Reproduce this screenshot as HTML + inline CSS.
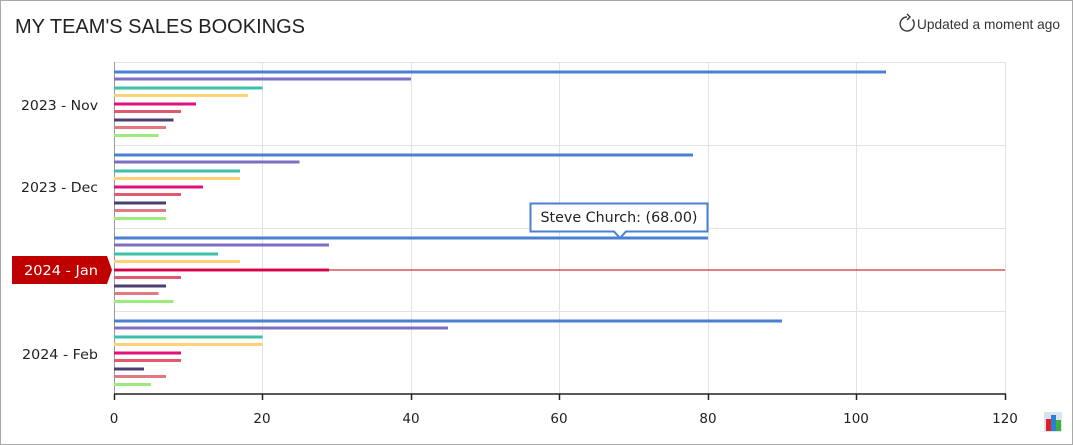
<!DOCTYPE html>
<html><head><meta charset="utf-8"><style>
html,body{margin:0;padding:0;background:#fff}
.w{position:relative;width:1071px;height:443px;border:1px solid #a9a9a9;background:#fff;overflow:hidden}
svg{position:absolute;left:-1px;top:-1px}
</style></head><body><div class="w">
<svg width="1073" height="445" xmlns="http://www.w3.org/2000/svg" font-family="'DejaVu Sans',Verdana,sans-serif">
<text x="15" y="33" font-family="'Liberation Sans',Arial,sans-serif" font-size="20" fill="#222" textLength="290" lengthAdjust="spacingAndGlyphs">MY TEAM'S SALES BOOKINGS</text>
<g fill="none" stroke="#333" stroke-width="1.4"><path d="M907 17 A7 7 0 1 0 912.5 19.5"/><path d="M907 14 L910 17 L907 20"/></g>
<text x="917" y="29" font-family="'Liberation Sans',Arial,sans-serif" font-size="14" fill="#333" textLength="143" lengthAdjust="spacingAndGlyphs">Updated a moment ago</text>
<g stroke="#e2e2e2" stroke-width="1">
<line x1="114" y1="62.5" x2="1005" y2="62.5"/><line x1="114" y1="145.5" x2="1005" y2="145.5"/><line x1="114" y1="228.5" x2="1005" y2="228.5"/><line x1="114" y1="311.5" x2="1005" y2="311.5"/>
<line x1="262.5" y1="62" x2="262.5" y2="394"/><line x1="411.5" y1="62" x2="411.5" y2="394"/><line x1="559.5" y1="62" x2="559.5" y2="394"/><line x1="708.5" y1="62" x2="708.5" y2="394"/><line x1="856.5" y1="62" x2="856.5" y2="394"/><line x1="1005.5" y1="62" x2="1005.5" y2="394"/>
</g>
<line x1="114.5" y1="62" x2="114.5" y2="394" stroke="#999"/>
<g id="bars">
<rect x="114" y="70.5" width="772" height="3" fill="#4a7fd4"/><rect x="114" y="77.5" width="297" height="3" fill="#7b6fc4"/><rect x="114" y="86.5" width="148.5" height="3" fill="#3dbfa8"/><rect x="114" y="94" width="134" height="3" fill="#ffd27a"/><rect x="114" y="102.5" width="82" height="3" fill="#e0117a"/><rect x="114" y="110" width="67" height="3" fill="#e05a6e"/><rect x="114" y="118.5" width="59.5" height="3" fill="#4a3f6e"/><rect x="114" y="126" width="52" height="3" fill="#e07a80"/><rect x="114" y="134" width="44.5" height="3" fill="#9fea80"/>
<rect x="114" y="153.5" width="579" height="3" fill="#4a7fd4"/><rect x="114" y="160.5" width="185.5" height="3" fill="#7b6fc4"/><rect x="114" y="169.5" width="126" height="3" fill="#3dbfa8"/><rect x="114" y="177" width="126" height="3" fill="#ffd27a"/><rect x="114" y="185.5" width="89" height="3" fill="#e0117a"/><rect x="114" y="193" width="67" height="3" fill="#e05a6e"/><rect x="114" y="201.5" width="52" height="3" fill="#4a3f6e"/><rect x="114" y="209" width="52" height="3" fill="#e07a80"/><rect x="114" y="217" width="52" height="3" fill="#9fea80"/>
<rect x="114" y="236.5" width="594" height="3" fill="#4a7fd4"/><rect x="114" y="243.5" width="215" height="3" fill="#7b6fc4"/><rect x="114" y="252.5" width="104" height="3" fill="#3dbfa8"/><rect x="114" y="260" width="126" height="3" fill="#ffd27a"/><rect x="114" y="268.5" width="215" height="3" fill="#e0117a"/><rect x="114" y="276" width="67" height="3" fill="#e05a6e"/><rect x="114" y="284.5" width="52" height="3" fill="#4a3f6e"/><rect x="114" y="292" width="44.5" height="3" fill="#e07a80"/><rect x="114" y="300" width="59.5" height="3" fill="#9fea80"/>
<rect x="114" y="319.5" width="668" height="3" fill="#4a7fd4"/><rect x="114" y="326.5" width="334" height="3" fill="#7b6fc4"/><rect x="114" y="335.5" width="148.5" height="3" fill="#3dbfa8"/><rect x="114" y="343" width="148.5" height="3" fill="#ffd27a"/><rect x="114" y="351.5" width="67" height="3" fill="#e0117a"/><rect x="114" y="359" width="67" height="3" fill="#e05a6e"/><rect x="114" y="367.5" width="30" height="3" fill="#4a3f6e"/><rect x="114" y="375" width="52" height="3" fill="#e07a80"/><rect x="114" y="383" width="37" height="3" fill="#9fea80"/>
</g>
<line x1="114" y1="270" x2="1005" y2="270" stroke="#c00000" stroke-width="1"/>
<g stroke="#222" stroke-width="1.5"><line x1="114" y1="394" x2="1006" y2="394"/>
<line x1="114.5" y1="394" x2="114.5" y2="400"/><line x1="262.5" y1="394" x2="262.5" y2="400"/><line x1="411.5" y1="394" x2="411.5" y2="400"/><line x1="559.5" y1="394" x2="559.5" y2="400"/><line x1="708.5" y1="394" x2="708.5" y2="400"/><line x1="856.5" y1="394" x2="856.5" y2="400"/><line x1="1005.5" y1="394" x2="1005.5" y2="400"/></g>
<g font-size="13.5" fill="#222" text-anchor="middle">
<text x="114" y="423">0</text><text x="262" y="423">20</text><text x="411" y="423">40</text><text x="559" y="423">60</text><text x="708" y="423">80</text><text x="856" y="423">100</text><text x="1005" y="423">120</text>
</g>
<g font-size="13.5" fill="#222" text-anchor="end">
<text x="98" y="110" textLength="77" lengthAdjust="spacingAndGlyphs">2023 - Nov</text><text x="98" y="192" textLength="77" lengthAdjust="spacingAndGlyphs">2023 - Dec</text><text x="98" y="359" textLength="76" lengthAdjust="spacingAndGlyphs">2024 - Feb</text>
</g>
<path d="M12 256 H107 L112 270 L107 284 H12 Z" fill="#c00000"/>
<text x="24" y="275" font-size="13.5" fill="#fff" textLength="74" lengthAdjust="spacingAndGlyphs">2024 - Jan</text>
<path d="M530.5 203.5 H707.5 V231.5 H626 L620 238 L614 231.5 H530.5 Z" fill="#fff" stroke="#4a7fd4" stroke-width="2"/>
<text x="619" y="222" font-size="14" fill="#222" text-anchor="middle" textLength="157" lengthAdjust="spacingAndGlyphs">Steve Church: (68.00)</text>
<g><rect x="1044" y="412" width="18" height="20" fill="#dde3ea"/><rect x="1046" y="419" width="5" height="12" fill="#e02020"/><rect x="1051" y="415" width="5" height="16" fill="#2a7fd8"/><rect x="1056" y="420" width="5" height="11" fill="#3cb040"/></g>
</svg></div></body></html>
